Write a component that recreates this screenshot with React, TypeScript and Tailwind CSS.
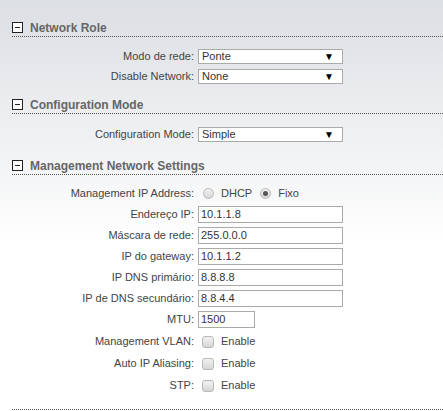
import React from 'react';

const font = { fontFamily: '"Liberation Sans", Arial, sans-serif' };

function SectionHeader({ title }: { title: string }) {
  return (
    <div className="ml-[12px] flex items-center gap-[7px] pb-[3px] border-b border-dotted border-[#555] h-[11px] box-content">
      <span className="shrink-0 w-[11px] h-[11px] border border-[#222] bg-white flex items-center justify-center box-border">
        <span className="w-[5px] h-[1px] bg-[#222]" />
      </span>
      <span className="text-[12px] font-bold text-[#666] leading-[11px] pt-[1px]">{title}</span>
    </div>
  );
}

function Row({ label, children, className = '' }: { label: string; children: React.ReactNode; className?: string }) {
  return (
    <div className={`flex items-center ${className}`}>
      <div className="shrink-0 w-[194px] text-right text-[11px] text-[#444] leading-none">{label}</div>
      <div className="ml-[4px] flex items-center">{children}</div>
    </div>
  );
}

function Select({ value }: { value: string }) {
  return (
    <div className="w-[145px] h-[15px] border border-[#aaa] bg-white flex items-center justify-between pl-[3px] pr-[8px] text-[11px] text-[#333] leading-none">
      <span>{value}</span>
      <span className="text-[10px] text-black">▼</span>
    </div>
  );
}

function Input({ value, w = 'w-[145px]' }: { value: string; w?: string }) {
  return (
    <div className={`${w} h-[17px] border border-[#aaa] bg-white flex items-center pl-[2px] text-[11px] text-[#333] leading-none`}>
      {value}
    </div>
  );
}

function Radio({ checked }: { checked?: boolean }) {
  return (
    <span className="shrink-0 w-[11px] h-[11px] rounded-full border border-[#b8b8b8] bg-gradient-to-b from-[#f2f2f2] to-[#d6d6d6] flex items-center justify-center">
      {checked && <span className="w-[5px] h-[5px] rounded-full bg-[#555]" />}
    </span>
  );
}

function Check() {
  return (
    <span className="block shrink-0 w-[12px] h-[12px] rounded-[3px] border border-[#b8b8b8] bg-gradient-to-b from-[#f2f2f2] to-[#d6d6d6]" />
  );
}

export default function App() {
  return (
    <div style={font} className="w-[443px] h-[411px] overflow-hidden bg-gradient-to-b from-[#dcdfe3] via-white via-[60%] to-white">
      <div className="pt-[22px]">
        <SectionHeader title="Network Role" />
        <Row label="Modo de rede:" className="mt-[12px]">
          <Select value="Ponte" />
        </Row>
        <Row label="Disable Network:" className="mt-[5px]">
          <Select value="None" />
        </Row>

        <div className="mt-[15px]">
          <SectionHeader title="Configuration Mode" />
        </div>
        <Row label="Configuration Mode:" className="mt-[13px]">
          <Select value="Simple" />
        </Row>

        <div className="mt-[18px]">
          <SectionHeader title="Management Network Settings" />
        </div>
        <Row label="Management IP Address:" className="mt-[10px] h-[17px]">
          <span className="ml-[5px]"><Radio /></span>
          <span className="ml-[7px] text-[11px] text-[#444]">DHCP</span>
          <span className="ml-[8px]"><Radio checked /></span>
          <span className="ml-[7px] text-[11px] text-[#444]">Fixo</span>
        </Row>
        <Row label="Endereço IP:" className="mt-[4px]">
          <Input value="10.1.1.8" />
        </Row>
        <Row label="Máscara de rede:" className="mt-[4px]">
          <Input value="255.0.0.0" />
        </Row>
        <Row label="IP do gateway:" className="mt-[4px]">
          <Input value="10.1.1.2" />
        </Row>
        <Row label="IP DNS primário:" className="mt-[4px]">
          <Input value="8.8.8.8" />
        </Row>
        <Row label="IP de DNS secundário:" className="mt-[4px]">
          <Input value="8.8.4.4" />
        </Row>
        <Row label="MTU:" className="mt-[4px]">
          <Input value="1500" w="w-[57px]" />
        </Row>
        {['Management VLAN:', 'Auto IP Aliasing:', 'STP:'].map((l) => (
          <Row key={l} label={l} className="h-[17px] mt-[5px]">
            <span className="ml-[4px]"><Check /></span>
            <span className="ml-[7px] text-[11px] text-[#444]">Enable</span>
          </Row>
        ))}
        <div className="ml-[12px] mt-[15px] border-b border-dotted border-[#555]" />
      </div>
    </div>
  );
}
